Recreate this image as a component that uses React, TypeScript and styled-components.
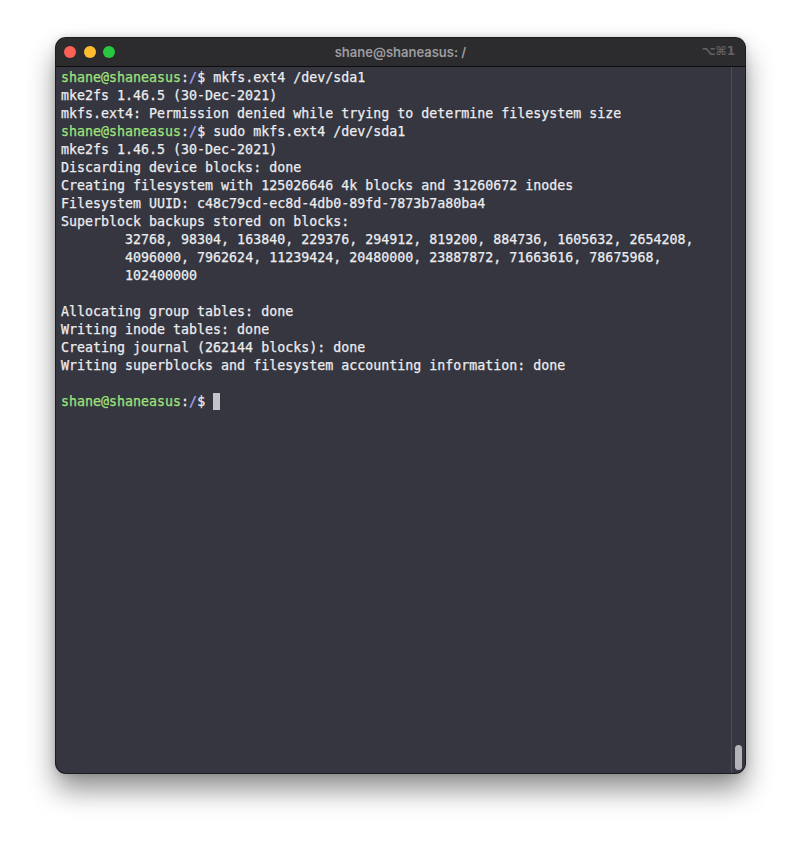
import React from "react"
import styled, { createGlobalStyle } from "styled-components"

const GlobalStyle = createGlobalStyle`
  html, body {
    margin: 0;
    padding: 0;
    background: #ffffff;
  }
`

const Page = styled.div`
  width: 801px;
  height: 847px;
  box-sizing: border-box;
  padding: 38px 0 0 56px;
  background: #ffffff;
`

const Window = styled.div`
  width: 689px;
  height: 735px;
  display: flex;
  flex-direction: column;
  border-radius: 10px;
  overflow: hidden;
  background: #35363f;
  box-shadow: 0 0 0 1px #1c1c1f, 0 16px 28px rgba(0, 0, 0, 0.45),
    0 0 8px rgba(0, 0, 0, 0.18);
`

const TitleBar = styled.div`
  position: relative;
  height: 28px;
  flex: none;
  display: flex;
  align-items: center;
  justify-content: center;
  background: #2c2c2f;
  border-bottom: 1px solid #0d0d0f;
`

const Lights = styled.div`
  position: absolute;
  left: 8px;
  top: 8px;
  display: flex;
  gap: 7.5px;
`

const Light = styled.span<{ $color: string }>`
  width: 12px;
  height: 12px;
  border-radius: 50%;
  background: ${(p) => p.$color};
`

const Title = styled.div`
  font-family: Inter, "Liberation Sans", sans-serif;
  font-size: 13px;
  font-weight: 600;
  color: #9c9c9f;
`

const Shortcut = styled.div`
  position: absolute;
  right: 10px;
  top: 6px;
  font-family: "DejaVu Sans", Inter, sans-serif;
  font-size: 12px;
  font-weight: 700;
  color: #626265;
`

const Body = styled.div`
  flex: 1;
  display: flex;
  min-height: 0;
`

const Screen = styled.pre`
  flex: 1;
  margin: 0;
  padding: 2px 0 0 5px;
  font-family: "DejaVu Sans Mono", "Liberation Mono", monospace;
  font-size: 13.3px;
  line-height: 18px;
  font-weight: 400;
  color: #ececf0;
  -webkit-text-stroke: 0.25px #ececf0;
  tab-size: 8;
  white-space: pre;
`

const User = styled.span`
  color: #9fe27a;
  -webkit-text-stroke: 0.25px #9fe27a;
`

const Path = styled.span`
  color: #a9a5f5;
  -webkit-text-stroke: 0.25px #a9a5f5;
`

const Cursor = styled.span`
  display: inline-block;
  width: 7px;
  height: 17px;
  vertical-align: -4px;
  background: #c4c4cb;
`

const ScrollTrack = styled.div`
  width: 14px;
  flex: none;
  display: flex;
  flex-direction: column;
  justify-content: flex-end;
  align-items: center;
  padding-bottom: 3px;
  box-sizing: border-box;
  border-left: 1px solid #4b4c55;
  background: #363740;
`

const ScrollThumb = styled.div`
  width: 7px;
  height: 25px;
  border-radius: 4px;
  background: #b3b3bb;
`

const Prompt = () => (
  <>
    <User>shane@shaneasus</User>:<Path>/</Path>$
  </>
)

export default function App() {
  return (
    <Page>
      <GlobalStyle />
      <Window>
        <TitleBar>
          <Lights>
            <Light $color="#fe5f57" />
            <Light $color="#febc2e" />
            <Light $color="#28c840" />
          </Lights>
          <Title>shane@shaneasus: /</Title>
          <Shortcut>⌥⌘1</Shortcut>
        </TitleBar>
        <Body>
          <Screen>
            <Prompt /> mkfs.ext4 /dev/sda1{"\n"}
            mke2fs 1.46.5 (30-Dec-2021){"\n"}
            mkfs.ext4: Permission denied while trying to determine filesystem size{"\n"}
            <Prompt /> sudo mkfs.ext4 /dev/sda1{"\n"}
            mke2fs 1.46.5 (30-Dec-2021){"\n"}
            Discarding device blocks: done{"\n"}
            Creating filesystem with 125026646 4k blocks and 31260672 inodes{"\n"}
            Filesystem UUID: c48c79cd-ec8d-4db0-89fd-7873b7a80ba4{"\n"}
            Superblock backups stored on blocks:{"\n"}
            {"\t"}32768, 98304, 163840, 229376, 294912, 819200, 884736, 1605632, 2654208,{"\n"}
            {"\t"}4096000, 7962624, 11239424, 20480000, 23887872, 71663616, 78675968,{"\n"}
            {"\t"}102400000{"\n"}
            {"\n"}
            Allocating group tables: done{"\n"}
            Writing inode tables: done{"\n"}
            Creating journal (262144 blocks): done{"\n"}
            Writing superblocks and filesystem accounting information: done{"\n"}
            {"\n"}
            <Prompt /> <Cursor />
          </Screen>
          <ScrollTrack>
            <ScrollThumb />
          </ScrollTrack>
        </Body>
      </Window>
    </Page>
  )
}
